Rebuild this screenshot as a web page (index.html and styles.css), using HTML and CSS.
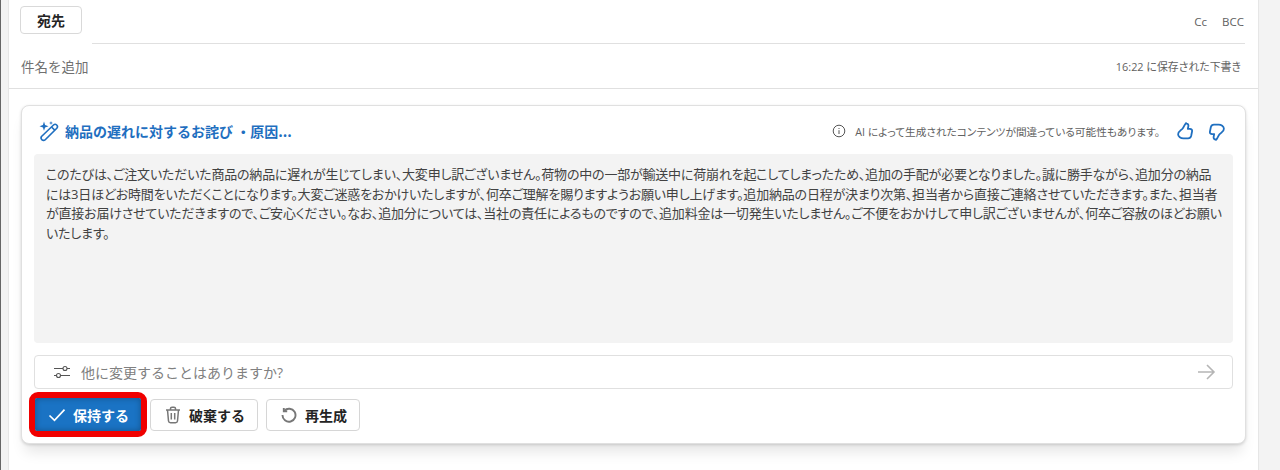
FILE: index.html
```html
<!DOCTYPE html>
<html lang="ja">
<head>
  <meta charset="UTF-8">
  <title>下書き</title>
  <link rel="stylesheet" href="styles.css">
</head>
<body>
  <div class="edge-left"></div>

  <div class="compose">
    <!-- To row -->
    <div class="to-row">
      <button class="to-btn">宛先</button>
      <div class="cc-links"><span>Cc</span><span>BCC</span></div>
    </div>

    <!-- Subject row -->
    <div class="subject-row">
      <span class="subject">件名を追加</span>
      <span class="saved">16:22 に保存された下書き</span>
    </div>

    <div class="card-area">
      <div class="card">
        <div class="card-head">
          <div class="card-title">
            <svg class="wand" width="22" height="22" viewBox="0 0 22 22" fill="none" stroke="#1f6fc0" stroke-width="1.600">
              <path d="M3.500 16.500L15.500 5a2.300 2.300 0 0 1 3.300 3.200L7.500 19.500a2.400 2.400 0 0 1-3.500.3q-1.700-1.600-.5-3.300z"/>
              <path d="M13.500 7L17 10.300"/>
              <path d="M6 1.500L7.100 5L10.500 6.200L7.100 7.400L6 10.800L4.900 7.400L1.500 6.200L4.900 5z" fill="#1f6fc0" stroke="none"/>
              <path d="M13 1L13.500 2.500L15 3L13.500 3.500L13 5L12.500 3.500L11 3L12.500 2.500z" fill="#1f6fc0" stroke="none"/>
            </svg>
            <span>納品の遅れに対するお詫び ・原因...</span>
          </div>
          <div class="card-note">
            <svg width="14" height="14" viewBox="0 0 14 14" fill="none" stroke="#555">
              <circle cx="7" cy="7" r="5.800"/>
              <path d="M7 6.200V10M7 4V5"/>
            </svg>
            <span>AI によって生成されたコンテンツが間違っている可能性もあります。</span>
          </div>
          <div class="thumbs">
            <svg width="17" height="19" viewBox="0 0 16 18" fill="none" stroke="#1f6fc0" stroke-width="1.700" stroke-linejoin="round">
              <path d="M8.500 1.500c1.500-.3 2.500 1 2.200 2.500l-.5 2.500h2c1.500 0 2.300 1 2 2.500l-.8 4c-.4 1.500-1.500 2.500-3 2.500H6c-2.500 0-5-1.500-5-4 0-1.500.8-2.500 2-3.300l2-1.700c1.500-1.500 2-4 3.500-5.500z"/>
            </svg>
            <svg class="thumb-down" width="17" height="19" viewBox="0 0 16 18" fill="none" stroke="#1f6fc0" stroke-width="1.700" stroke-linejoin="round">
              <path d="M8.500 1.500c1.500-.3 2.500 1 2.200 2.500l-.5 2.500h2c1.500 0 2.300 1 2 2.500l-.8 4c-.4 1.500-1.500 2.500-3 2.500H6c-2.500 0-5-1.500-5-4 0-1.500.8-2.500 2-3.300l2-1.700c1.500-1.500 2-4 3.500-5.500z" transform="rotate(180 8 9)"/>
            </svg>
          </div>
        </div>

        <div class="draft">このたびは、ご注文いただいた商品の納品に遅れが生じてしまい、大変申し訳ございません。荷物の中の一部が輸送中に荷崩れを起こしてしまったため、追加の手配が必要となりました。誠に勝手ながら、追加分の納品<br>には3日ほどお時間をいただくことになります。大変ご迷惑をおかけいたしますが、何卒ご理解を賜りますようお願い申し上げます。追加納品の日程が決まり次第、担当者から直接ご連絡させていただきます。また、担当者<br>が直接お届けさせていただきますので、ご安心ください。なお、追加分については、当社の責任によるものですので、追加料金は一切発生いたしません。ご不便をおかけして申し訳ございませんが、何卒ご容赦のほどお願い<br>いたします。</div>

        <div class="prompt">
          <svg width="18" height="16" viewBox="0 0 18 16" fill="none" stroke="#555" stroke-width="1.100">
            <path d="M1 4.500H10M14 4.500H17M1 11.500H3.500M7.500 11.500H17"/>
            <circle cx="12" cy="4.500" r="2"/>
            <circle cx="5.500" cy="11.500" r="2"/>
          </svg>
          <span class="prompt-text">他に変更することはありますか?</span>
          <svg class="send" width="20" height="18" viewBox="0 0 20 18" fill="none" stroke="#b5b5b5" stroke-width="1.600">
            <path d="M2 9H18M11 2L18 9L11 16"/>
          </svg>
        </div>

        <div class="actions">
          <div class="keep-mark">
            <button class="btn btn-keep">
              <svg width="18" height="14" viewBox="0 0 18 14" fill="none" stroke="#fff" stroke-width="1.700">
                <path d="M1.500 7.500L6.500 12.300L16.500 1.700"/>
              </svg>
              保持する
            </button>
          </div>
          <button class="btn">
            <svg width="16" height="18" viewBox="0 0 16 18" fill="none" stroke="#777" stroke-width="1.500">
              <path d="M1 4H15M5.500 4V2.500Q5.500 1.200 7 1.200H9Q10.500 1.200 10.500 2.500V4M2.500 4L3.500 15Q3.700 16.800 5.500 16.800H10.500Q12.300 16.800 12.500 15L13.500 4"/>
              <path d="M6.300 7V13.500M9.700 7V13.500"/>
            </svg>
            破棄する
          </button>
          <button class="btn">
            <svg width="16" height="16" viewBox="0 0 16 16" fill="none" stroke="#777" stroke-width="1.900">
              <path d="M3.200 3.800A6.500 6.500 0 1 1 1.500 8"/>
              <path d="M2.800 1V4.300H6.200"/>
            </svg>
            再生成
          </button>
        </div>
      </div>
    </div>
  </div>
</body>
</html>
```

FILE: styles.css
```css
* {
  box-sizing: border-box;
}
html, body {
  height: 470px;
  overflow: hidden;
}
body {
  margin: 0;
  display: flex;
  background: #f3f3f3;
  font-family: "Open Sans", "Noto Sans CJK JP", sans-serif;
  color: #242424;
}
.edge-left {
  width: 8px;
  background: #f3f3f3;
  border-left: 1px solid #666;
}
.compose {
  width: 1251px;
  height: 470px;
  background: #fff;
  border-left: 1px solid #e6e6e6;
  border-right: 1px solid #e6e6e6;
}

/* To row */
.to-row {
  height: 44px;
  margin-left: 83px;
  margin-right: 13px;
  border-bottom: 1px solid #e0e0e0;
  display: flex;
  justify-content: space-between;
  position: relative;
}
.to-btn {
  position: absolute;
  left: -72px;
  top: 6px;
  width: 62px;
  height: 28px;
  background: #fff;
  border: 1px solid #d9d9d9;
  border-radius: 4px;
  font: bold 14px "Noto Sans CJK JP", sans-serif;
  color: #242424;
  padding: 0;
}
.cc-links {
  margin-left: auto;
  display: flex;
  gap: 15px;
  padding: 13px 1px 0 0;
  font-size: 11.500px;
  line-height: 17px;
  color: #616161;
}

/* Subject row */
.subject-row {
  height: 45px;
  padding: 0 17px 0 12px;
  border-bottom: 1px solid #e0e0e0;
  display: flex;
  justify-content: space-between;
  align-items: center;
}
.subject {
  font-size: 13.500px;
  color: #707070;
}
.saved {
  font-size: 10.900px;
  color: #616161;
  font-feature-settings: "palt";
}

/* Card */
.card-area {
  padding: 16px 12px 0 12px;
}
.card {
  height: 339px;
  background: #fff;
  border: 1px solid #e0e0e0;
  border-radius: 8px;
  box-shadow: 0 1px 3px rgba(0, 0, 0, 0.15), 0 12px 14px -4px rgba(0, 0, 0, 0.1);
  padding: 0 12px;
}
.card-head {
  height: 48px;
  padding-top: 2px;
  display: flex;
  align-items: center;
}
.card-title {
  display: flex;
  align-items: center;
  gap: 5px;
  margin-left: 4px;
  font: bold 14px "Noto Sans CJK JP", sans-serif;
  color: #1f6fc0;
}
.card-note {
  margin-left: auto;
  display: flex;
  align-items: center;
  gap: 9px;
  font-size: 10.700px;
  color: #616161;
  font-feature-settings: "palt";
}
.thumbs {
  display: flex;
  gap: 14px;
  margin-left: 17px;
  margin-right: 8px;
  padding-top: 1px;
}
.draft {
  height: 189px;
  background: #f3f3f3;
  border-radius: 4px;
  padding: 11px 12px;
  font-size: 13px;
  line-height: 19.500px;
  letter-spacing: -0.200px;
  white-space: nowrap;
  color: #424242;
  font-feature-settings: "palt";
}
.prompt {
  height: 34px;
  margin-top: 12px;
  border: 1px solid #e0e0e0;
  border-radius: 4px;
  display: flex;
  align-items: center;
  padding: 0 16px 0 18px;
}
.prompt-text {
  margin-left: 10px;
  font-size: 14px;
  color: #808080;
}
.send {
  margin-left: auto;
}
.actions {
  margin-top: 3px;
  display: flex;
  align-items: center;
  gap: 8px;
}
.keep-mark {
  margin-left: -5px;
  margin-right: -5px;
  border: 6px solid #f00000;
  border-radius: 9px;
}
.btn {
  height: 32px;
  display: flex;
  align-items: center;
  gap: 8px;
  padding: 0 12px 0 14px;
  background: #fff;
  border: 1px solid #d6d6d6;
  border-radius: 4px;
  font: bold 14px "Noto Sans CJK JP", sans-serif;
  color: #242424;
}
.btn-keep {
  display: flex;
  gap: 7px;
  padding: 0 12px 0 13px;
  border: none;
  border-radius: 2px;
  height: 33px;
  background: #1a73c4;
  box-shadow: inset 0 0 6px rgba(0, 0, 0, 0.3);
  color: #fff;
}
```
